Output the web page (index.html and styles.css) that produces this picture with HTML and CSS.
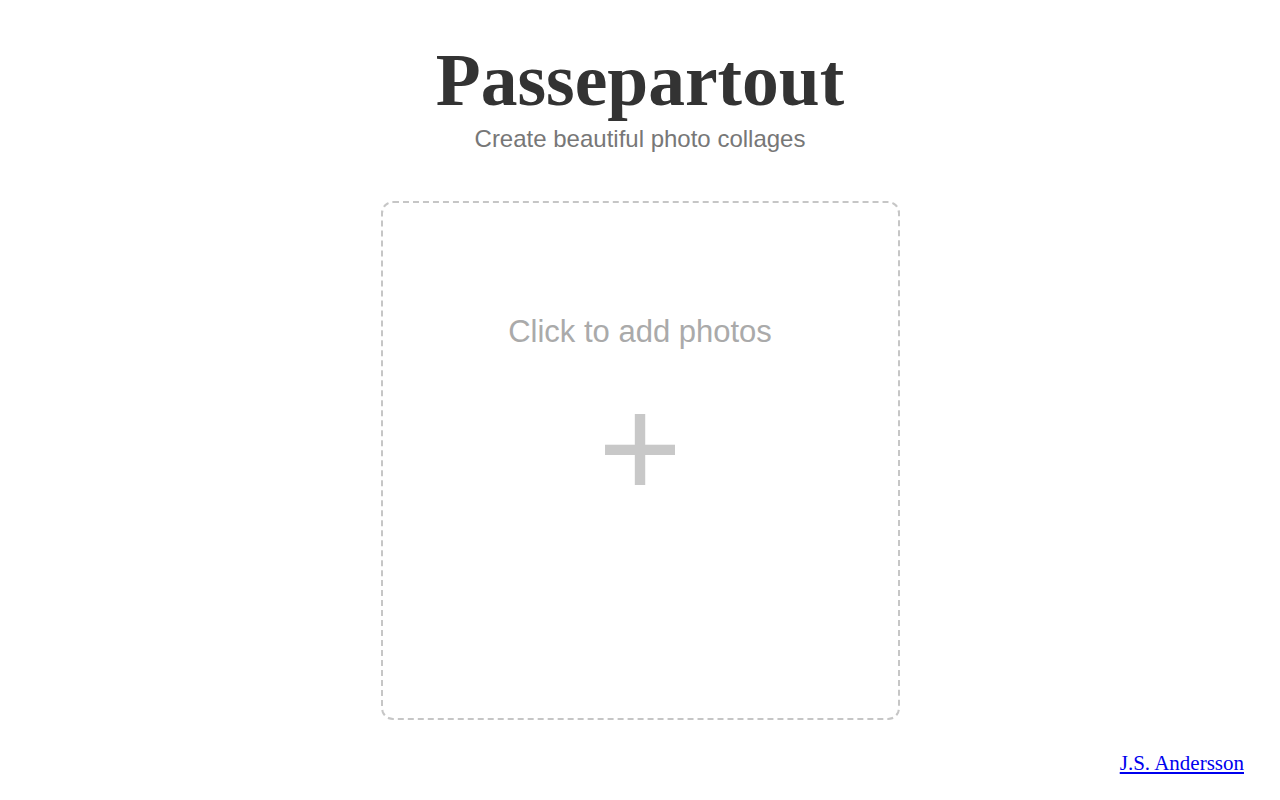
FILE: index.html
```html
<!DOCTYPE html>
<html>
<head>
<meta charset="utf-8">
<link rel="stylesheet" href="styles.css">
</head>
<body>
<header class="header">
  <h1 class="title">Passepartout</h1>
  <p class="subtitle">Create beautiful photo collages</p>
</header>
<main class="main">
  <div class="dropzone">
    <div class="drop-label">Click to add photos</div>
    <div class="drop-plus">+</div>
  </div>
</main>
<footer class="footer">
  <a class="author" href="#">J.S. Andersson</a>
</footer>
</body>
</html>
```

FILE: styles.css
```css
html, body {
  margin: 0;
  padding: 0;
  background: #ffffff;
}
body {
  width: 1280px;
  height: 800px;
  display: flex;
  flex-direction: column;
  align-items: center;
}
.header {
  display: flex;
  flex-direction: column;
  align-items: center;
  padding-top: 37px;
}
.title {
  margin: 0;
  font-family: "Liberation Serif", serif;
  font-weight: bold;
  font-size: 73.5px;
  line-height: 88px;
  color: #333333;
}
.subtitle {
  margin: 0;
  font-family: "Liberation Sans", Arial, sans-serif;
  font-size: 24px;
  line-height: 28px;
  color: #777777;
}
.main {
  margin-top: 48px;
}
.dropzone {
  box-sizing: border-box;
  width: 519px;
  height: 519px;
  border: 2px dashed #c6c6c6;
  border-radius: 12px;
  display: flex;
  flex-direction: column;
  align-items: center;
  padding-top: 111px;
}
.drop-label {
  font-family: "Liberation Sans", Arial, sans-serif;
  font-size: 31px;
  line-height: 36px;
  color: #aaaaaa;
}
.drop-plus {
  font-family: "Liberation Sans", Arial, sans-serif;
  font-size: 144px;
  line-height: 144px;
  color: #c8c8c8;
  margin-top: 27px;
}
.footer {
  align-self: stretch;
  display: flex;
  justify-content: flex-end;
  padding-right: 36px;
  margin-top: 31px;
}
.author {
  font-family: "Liberation Serif", serif;
  font-size: 21px;
  color: #0000ee;
}
```
